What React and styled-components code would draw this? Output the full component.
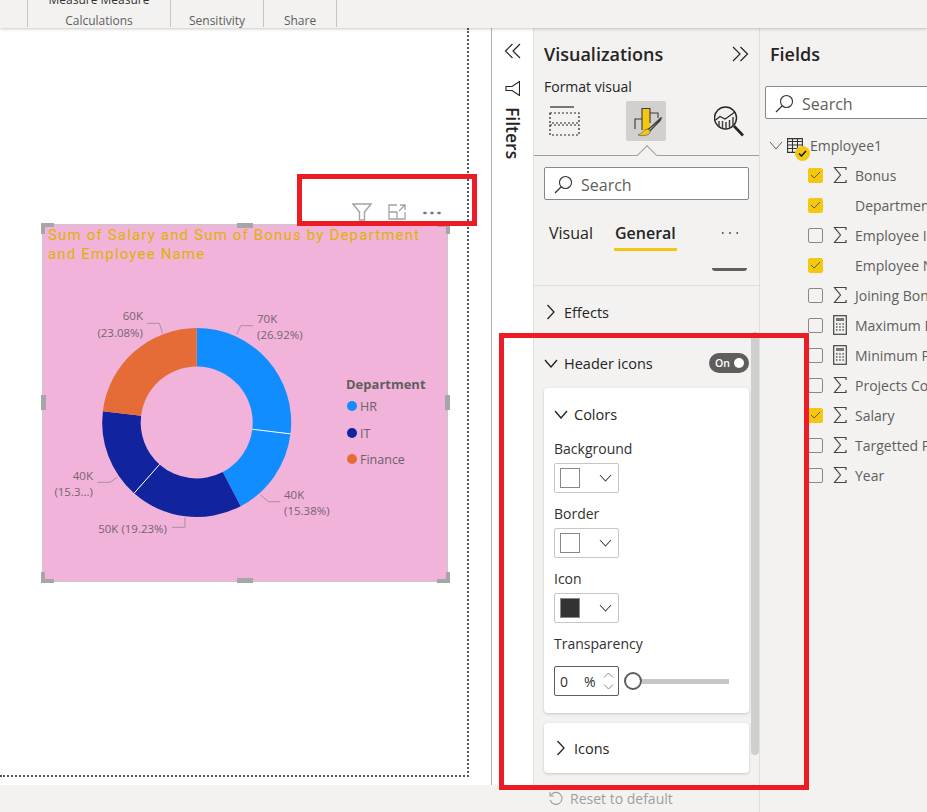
import React from "react";
import styled, { createGlobalStyle } from "styled-components";

const GlobalStyle = createGlobalStyle`
  html, body {
    margin: 0;
    padding: 0;
    background: #f3f2f1;
  }
  * { box-sizing: border-box; }
`;

const font = `"Open Sans", "Noto Sans", "Liberation Sans", sans-serif`;
const yellow = "#f2c811";

const Shell = styled.div`
  position: relative;
  width: 927px;
  height: 812px;
  overflow: hidden;
  background: #f3f2f1;
  font-family: ${font};
  color: #252423;
`;

/* ribbon */
const Ribbon = styled.div`
  position: relative;
  z-index: 2;
  display: flex;
  height: 28px;
  padding-left: 27px;
  overflow: hidden;
  background: #f3f2f1;
  box-shadow: 0 1px 3px rgba(0, 0, 0, 0.22);
`;

const RibbonGroup = styled.div`
  display: flex;
  flex-direction: column;
  justify-content: flex-end;
  align-items: center;
  width: ${(p) => p.$w}px;
  height: 27px;
  border-left: ${(p) => (p.$first ? "1px solid #c8c6c4" : "none")};
  border-right: 1px solid #c8c6c4;
`;

const RibbonTop = styled.span`
  font-size: 12px;
  line-height: 14px;
  height: 14px;
  margin-top: -21px;
  margin-bottom: 7px;
  color: #333;
  white-space: nowrap;
`;

const RibbonLabel = styled.span`
  margin-bottom: -1px;
  font-size: 12px;
  line-height: 14px;
  color: #605e5c;
`;

const Main = styled.div`
  display: flex;
  height: 784px;
`;

/* report canvas */
const Canvas = styled.div`
  width: 491px;
  height: 757px;
  background: #fff;
`;

const Page = styled.div`
  width: 469px;
  height: 749px;
  padding: 174px 0 0 43px;
  border-right: 2px dotted #555;
  border-bottom: 2px dotted #555;
`;

const VisualHeader = styled.div`
  display: flex;
  align-items: center;
  justify-content: flex-end;
  gap: 16px;
  width: 398px;
  height: 20px;
  margin-bottom: 3px;
  color: #a3a3a3;
`;

const DotsWrap = styled.span`
  margin: 1px 0 0 1px;
`;

const Visual = styled.div`
  position: relative;
  width: 404px;
  height: 356px;
  background: #f2b3db;
  outline: 1px solid #c8c8c8;
`;

const VisualTitle = styled.div`
  height: 47px;
  padding: 1px 15px 0 5px;
  font-family: Roboto, "Liberation Sans", sans-serif;
  font-size: 15px;
  line-height: 19px;
  letter-spacing: 1.17px;
  color: #dfb200;
`;

const ChartSvg = styled.svg`
  display: block;
`;

const ChartLabel = styled.text`
  font-family: ${font};
  font-size: 11.5px;
  fill: #75636f;
`;

const LegendTitle = styled.text`
  font-family: ${font};
  font-size: 13px;
  font-weight: 700;
  fill: #605e5c;
`;

const LegendText = styled.text`
  font-family: ${font};
  font-size: 12.5px;
  fill: #6d6068;
`;

const Corner = styled.i`
  position: absolute;
  width: 13px;
  height: 11px;
  border: 0 solid #a6a6a6;
  ${(p) => (p.$top ? "top: -2px; border-top-width: 4px;" : "bottom: -2px; border-bottom-width: 4px;")}
  ${(p) => (p.$left ? "left: -2px; border-left-width: 4px;" : "right: -3px; border-right-width: 4px;")}
`;

const EdgeHandle = styled.i`
  position: absolute;
  background: #a6a6a6;
  ${(p) =>
    p.$vertical
      ? `top: 170px; width: 5px; height: 15px; ${p.$left ? "left: -2px;" : "right: -3px;"}`
      : `left: 194px; width: 16px; height: 5px; ${p.$top ? "top: -2px;" : "bottom: -2px;"}`}
`;

/* filters strip */
const FiltersPane = styled.div`
  width: 43px;
  height: 757px;
  padding-top: 15px;
  display: flex;
  flex-direction: column;
  align-items: center;
  background: #fff;
  border-left: 1px solid #b3b0ad;
  border-right: 1px solid #e1dfdd;
  color: #252423;
`;

const FiltersLabel = styled.div`
  margin-top: 11px;
  writing-mode: vertical-rl;
  font-size: 17.5px;
  font-weight: 600;
  line-height: 20px;
  color: #252423;
`;

/* visualizations pane */
const VizPane = styled.div`
  position: relative;
  width: 226px;
  height: 784px;
  border-right: 1px solid #e1dfdd;
  background: #f3f2f1;
`;

const PaneHead = styled.div`
  display: flex;
  align-items: center;
  justify-content: space-between;
  height: 28px;
  margin-top: 12px;
  padding: 0 10px;
`;

const PaneTitle = styled.h2`
  margin: 0;
  font-size: 18px;
  font-weight: 600;
  color: #252423;
`;

const SubTitle = styled.div`
  height: 20px;
  margin: 9px 0 4px;
  padding-left: 10px;
  font-size: 14px;
  font-weight: 500;
  line-height: 20px;
  color: #252423;
`;

const TabIcons = styled.div`
  position: relative;
  display: flex;
  align-items: center;
  height: 55px;
  padding: 0 0 15px 15px;
  border-bottom: 1px solid #a19f9d;
`;

const ActiveIcon = styled.div`
  display: flex;
  align-items: center;
  justify-content: center;
  width: 40px;
  height: 40px;
  margin: 0 48px 0 46px;
  border-radius: 2px;
  background: #d2d0ce;
`;

const Notch = styled.i`
  position: absolute;
  left: 106px;
  bottom: -7px;
  width: 14px;
  height: 14px;
  transform: rotate(45deg);
  background: #f3f2f1;
  border-left: 1px solid #a19f9d;
  border-top: 1px solid #a19f9d;
`;

const SearchBox = styled.div`
  display: flex;
  align-items: center;
  gap: 8px;
  width: ${(p) => p.$w}px;
  height: 33px;
  padding: 2px 0 0 9px;
  background: #fff;
  border: 1px solid #8a8886;
  border-radius: 2px;
  font-size: 16px;
  color: #605e5c;
  flex: none;
`;

const SearchWrap = styled.div`
  margin-top: 11px;
  padding-left: 10px;
`;

const TabRow = styled.div`
  display: flex;
  align-items: flex-start;
  height: 33px;
  margin-top: 18px;
  padding-left: 14px;
`;

const Tab = styled.div`
  height: 33px;
  margin-right: ${(p) => p.$gap}px;
  padding: 0 1px 3px;
  font-size: 16px;
  font-weight: ${(p) => (p.$active ? 600 : 400)};
  line-height: 30px;
  color: #252423;
  border-bottom: 3px solid ${(p) => (p.$active ? yellow : "transparent")};
`;

const TabMore = styled.div`
  margin-top: 13px;
`;

const CutOff = styled.div`
  height: 35px;
  padding: 17px 0 0 178px;
  border-bottom: 1px solid #e1dfdd;
`;

const CutOffBar = styled.i`
  display: block;
  width: 35px;
  height: 3px;
  border-radius: 0 0 8px 8px;
  background: #605e5c;
`;

const SectionRow = styled.div`
  display: flex;
  align-items: center;
  gap: 6px;
  height: ${(p) => p.$h || 30}px;
  margin-top: ${(p) => p.$top || 0}px;
  padding: 0 ${(p) => p.$right || 0}px 0 ${(p) => p.$left ?? 10}px;
  font-size: 14.5px;
  font-weight: 500;
  color: #252423;
`;

const Grow = styled.span`
  flex: 1;
`;

const Toggle = styled.div`
  display: flex;
  align-items: center;
  justify-content: space-between;
  width: 40px;
  height: 20px;
  padding: 0 5px 0 6px;
  border-radius: 10px;
  background: #605e5c;
  font-size: 10.5px;
  font-weight: 600;
  color: #fff;
`;

const ToggleKnob = styled.i`
  width: 10px;
  height: 10px;
  border-radius: 50%;
  background: #fff;
`;

const Card = styled.div`
  width: 205px;
  height: ${(p) => p.$h}px;
  margin: ${(p) => p.$top}px 0 0 10px;
  padding: 0 10px;
  background: #fff;
  border-radius: 4px;
  box-shadow: 0 1px 3px rgba(0, 0, 0, 0.18);
`;

const CardHead = styled.div`
  display: flex;
  align-items: center;
  gap: 6px;
  height: 36px;
  padding-top: 16px;
  font-size: 14.5px;
  font-weight: 500;
  color: #252423;
`;

const FieldLabel = styled.div`
  height: 20px;
  margin-top: ${(p) => p.$top}px;
  margin-bottom: ${(p) => p.$bottom}px;
  font-size: 14px;
  line-height: 20px;
  color: #323130;
`;

const ColorSelect = styled.div`
  display: flex;
  align-items: center;
  justify-content: space-between;
  width: 65px;
  height: 30px;
  padding: 0 6px 0 5px;
  border: 1px solid #c8c6c4;
  border-radius: 2px;
`;

const Swatch = styled.i`
  width: 20px;
  height: 20px;
  border: 1px solid #8a8886;
  background: ${(p) => p.$color};
`;

const SliderRow = styled.div`
  display: flex;
  align-items: center;
`;

const PercentInput = styled.div`
  display: flex;
  align-items: center;
  width: 65px;
  height: 30px;
  padding: 0 4px 0 5px;
  border: 1px solid #605e5c;
  border-radius: 2px;
  font-size: 14px;
  color: #323130;
`;

const PercentValue = styled.span`
  width: 24px;
`;

const Spinners = styled.div`
  display: flex;
  flex-direction: column;
  gap: 6px;
  margin-left: auto;
`;

const SliderKnob = styled.i`
  flex: none;
  width: 18px;
  height: 18px;
  margin-left: 5px;
  border: 2px solid #605e5c;
  border-radius: 50%;
  background: #fff;
`;

const SliderTrack = styled.i`
  width: 87px;
  height: 5px;
  background: #c8c6c4;
`;

const Reset = styled.div`
  display: flex;
  align-items: center;
  gap: 6px;
  height: 20px;
  margin-top: 15px;
  padding-left: 14px;
  font-size: 14px;
  color: #a19f9d;
`;

const ScrollThumb = styled.i`
  position: absolute;
  top: 304px;
  right: 0;
  width: 8px;
  height: 423px;
  border-radius: 4px;
  background: #cfcfcd;
`;

/* fields pane */
const FieldsPane = styled.div`
  flex: 1;
  min-width: 0;
  overflow: hidden;
  height: 784px;
`;

const FieldsSearch = styled.div`
  padding: 18px 0 0 5px;
`;

const TreeHead = styled.div`
  display: flex;
  align-items: center;
  height: 30px;
  margin-top: 11px;
  padding-left: 9px;
  font-size: 14px;
  color: #605e5c;
  white-space: nowrap;
`;

const TableWrap = styled.span`
  position: relative;
  width: 16px;
  height: 15px;
  margin: 0 7px 0 4px;
`;

const TableBadge = styled.i`
  position: absolute;
  left: 8px;
  top: 8px;
  display: flex;
  align-items: center;
  justify-content: center;
  width: 15px;
  height: 15px;
  border-radius: 50%;
  background: ${yellow};
`;

const FieldRow = styled.div`
  display: flex;
  align-items: center;
  height: 30px;
  padding-left: 48px;
  font-size: 14px;
  color: #605e5c;
  white-space: nowrap;
`;

const Check = styled.span`
  display: flex;
  align-items: center;
  justify-content: center;
  flex: none;
  width: 15px;
  height: 15px;
  border-radius: 2px;
  border: 1px solid ${(p) => (p.$on ? yellow : "#8a8886")};
  background: ${(p) => (p.$on ? yellow : "transparent")};
`;

const FieldIcon = styled.span`
  display: flex;
  justify-content: center;
  flex: none;
  width: 14px;
  margin: 0 8px 0 10px;
`;

/* annotation boxes */
const RedBox = styled.div`
  position: absolute;
  z-index: 5;
  left: ${(p) => p.$x}px;
  top: ${(p) => p.$y}px;
  width: ${(p) => p.$w}px;
  height: ${(p) => p.$h}px;
  border: 5px solid #ed1c24;
  pointer-events: none;
`;

const Svg = ({ w, h, children, ...rest }) => (
  <svg width={w} height={h} viewBox={`0 0 ${w} ${h}`} fill="none" style={{ flex: "none", display: "block" }} {...rest}>
    {children}
  </svg>
);

const ChevronRight = ({ size = 14 }) => (
  <Svg w={size} h={size + 2}>
    <path d={`M3.5 1 L${size - 4} ${(size + 2) / 2} L3.5 ${size + 1}`} stroke="#252423" strokeWidth="1.3" />
  </Svg>
);

const ChevronDown = ({ w = 14, h = 9, color = "#252423", sw = 1.4 }) => (
  <Svg w={w} h={h}>
    <path d={`M1 1 L${w / 2} ${h - 1} L${w - 1} 1`} stroke={color} strokeWidth={sw} />
  </Svg>
);

const DoubleChevron = ({ left }) => (
  <Svg w={17} h={16} style={{ display: "block", transform: left ? "scaleX(-1)" : "none" }}>
    <path d="M1 1 L8 8 L1 15 M8.5 1 L15.5 8 L8.5 15" stroke="#252423" strokeWidth="1.2" />
  </Svg>
);

const SearchIcon = () => (
  <Svg w={19} h={19}>
    <circle cx="11.5" cy="7.5" r="6" stroke="#323130" strokeWidth="1.1" />
    <path d="M7.3 11.8 L1 18" stroke="#323130" strokeWidth="1.2" />
  </Svg>
);

const Sigma = () => (
  <Svg w={14} h={18}>
    <path d="M13 4 V1.5 H1.5 L7.5 9 L1.5 16.5 H13 V14" stroke="#444" strokeWidth="1.2" />
  </Svg>
);

const Calculator = () => (
  <Svg w={14} h={20}>
    <rect x="0.7" y="0.7" width="12.6" height="18.6" stroke="#444" strokeWidth="1.2" />
    <rect x="3" y="3" width="8" height="3" fill="#777" />
    <path d="M3 9 H4.5 M6.2 9 H7.7 M9.4 9 H10.9 M3 12 H4.5 M6.2 12 H7.7 M9.4 12 H10.9 M3 15 H4.5 M6.2 15 H7.7 M9.4 15 H10.9" stroke="#555" strokeWidth="1.5" />
  </Svg>
);

const Tick = ({ color = "#6b5b10", w = 11, h = 8, sw = 1 }) => (
  <Svg w={w} h={h}>
    <path d={`M1 ${h / 2} L${w * 0.38} ${h - 1} L${w - 1} 1`} stroke={color} strokeWidth={sw} />
  </Svg>
);

const polar = (cx, cy, r, deg) => {
  const a = ((deg - 90) * Math.PI) / 180;
  return [cx + r * Math.cos(a), cy + r * Math.sin(a)];
};

const ringPath = (start, end) => {
  const [cx, cy, R, r] = [196.7, 422.5, 94.5, 56];
  const [x1, y1] = polar(cx, cy, R, start);
  const [x2, y2] = polar(cx, cy, R, end);
  const [x3, y3] = polar(cx, cy, r, end);
  const [x4, y4] = polar(cx, cy, r, start);
  const large = end - start > 180 ? 1 : 0;
  return `M${x1} ${y1} A${R} ${R} 0 ${large} 1 ${x2} ${y2} L${x3} ${y3} A${r} ${r} 0 ${large} 0 ${x4} ${y4} Z`;
};

const slices = [
  { from: 0, to: 26.92, color: "#118dff" },
  { from: 26.92, to: 42.3, color: "#118dff" },
  { from: 42.3, to: 61.53, color: "#12239e" },
  { from: 61.53, to: 76.92, color: "#12239e" },
  { from: 76.92, to: 100, color: "#e66c37" },
];

const leaders = [
  "M236.7 334.3 L240.7 325.7 H252.7",
  "M162.7 333.3 L159.3 323.3 H147.3",
  "M117.3 477.3 L110 482.3 H97.3",
  "M260.7 495 L268.3 501.7 H280",
  "M185 517.7 V527.3 H171.7",
];

const labels = [
  { x: 257, y: 323, text: "70K" },
  { x: 257, y: 339, text: "(26.92%)" },
  { x: 143, y: 320, text: "60K", end: true },
  { x: 143, y: 337, text: "(23.08%)", end: true },
  { x: 93, y: 480, text: "40K", end: true },
  { x: 93, y: 496, text: "(15.3...)", end: true },
  { x: 284, y: 499, text: "40K" },
  { x: 284, y: 515, text: "(15.38%)" },
  { x: 167, y: 533, text: "50K (19.23%)", end: true },
];

const legend = [
  { y: 406, color: "#118dff", text: "HR" },
  { y: 433, color: "#12239e", text: "IT" },
  { y: 459, color: "#e66c37", text: "Finance" },
];

const DonutChart = () => {
  const separators = [26.92, 61.53].map((pct) => {
    const deg = pct * 3.6;
    const [x1, y1] = polar(196.7, 422.5, 56, deg);
    const [x2, y2] = polar(196.7, 422.5, 94.5, deg);
    return { x1, y1, x2, y2 };
  });
  return (
    <ChartSvg width="404" height="309" viewBox="43 272 404 309">
      {slices.map((s) => (
        <path key={s.from} d={ringPath(s.from * 3.6, s.to * 3.6)} fill={s.color} />
      ))}
      {separators.map((s) => (
        <line key={s.x1} {...s} stroke="#fff" strokeWidth="1" />
      ))}
      {leaders.map((d) => (
        <path key={d} d={d} fill="none" stroke="#a6909f" strokeWidth="1" />
      ))}
      {labels.map((l) => (
        <ChartLabel key={l.text + l.y} x={l.x} y={l.y} textAnchor={l.end ? "end" : "start"}>
          {l.text}
        </ChartLabel>
      ))}
      <LegendTitle x="346" y="389">Department</LegendTitle>
      {legend.map((l) => (
        <g key={l.text}>
          <circle cx="352" cy={l.y} r="5" fill={l.color} />
          <LegendText x="360" y={l.y + 4.5}>{l.text}</LegendText>
        </g>
      ))}
    </ChartSvg>
  );
};

const fields = [
  { name: "Bonus", on: true, icon: "sum" },
  { name: "Department", on: true },
  { name: "Employee ID", icon: "sum" },
  { name: "Employee Name", on: true },
  { name: "Joining Bonus", icon: "sum" },
  { name: "Maximum Pay", icon: "calc" },
  { name: "Minimum Pay", icon: "calc" },
  { name: "Projects Completed", icon: "sum" },
  { name: "Salary", on: true, icon: "sum" },
  { name: "Targetted Projects", icon: "sum" },
  { name: "Year", icon: "sum" },
];

const colorFields = [
  { label: "Background", color: "#fff", top: 15 },
  { label: "Border", color: "#fff", top: 11 },
  { label: "Icon", color: "#333", top: 11 },
];

export default function App() {
  return (
    <Shell>
      <GlobalStyle />
      <Ribbon>
        <RibbonGroup $w={144} $first>
          <RibbonTop>Measure Measure</RibbonTop>
          <RibbonLabel>Calculations</RibbonLabel>
        </RibbonGroup>
        <RibbonGroup $w={93}>
          <RibbonLabel>Sensitivity</RibbonLabel>
        </RibbonGroup>
        <RibbonGroup $w={73}>
          <RibbonLabel>Share</RibbonLabel>
        </RibbonGroup>
      </Ribbon>

      <Main>
        <Canvas>
          <Page>
            <VisualHeader>
              <Svg w={20} h={18}>
                <path d="M1 1 H19 L12.5 9 V17 H7.5 V9 Z" stroke="#a3a3a3" strokeWidth="1.4" />
              </Svg>
              <Svg w={18} h={16}>
                <path d="M9 1 H1 V15 H17 V8 M1 8 H9 V15 M11 7 L17 1 M12 1 H17 V6" stroke="#a3a3a3" strokeWidth="1.3" />
              </Svg>
              <DotsWrap>
                <Svg w={18} h={4}>
                  <path d="M1.5 2 H2.5 M8.5 2 H9.5 M15.5 2 H16.5" stroke="#7a7876" strokeWidth="2.6" strokeLinecap="round" />
                </Svg>
              </DotsWrap>
            </VisualHeader>
            <Visual>
              <VisualTitle>Sum of Salary and Sum of Bonus by Department and Employee Name</VisualTitle>
              <DonutChart />
              <Corner $top $left />
              <Corner $top />
              <Corner $left />
              <Corner />
              <EdgeHandle $top />
              <EdgeHandle />
              <EdgeHandle $vertical $left />
              <EdgeHandle $vertical />
            </Visual>
          </Page>
        </Canvas>

        <FiltersPane>
          <DoubleChevron left />
          <Svg w={15} h={15} style={{ display: "block", marginTop: 22 }}>
            <path d="M14.5 0.5 V14.5 L7 9.5 H1 V5.5 H7 Z" stroke="#252423" strokeWidth="1.1" />
          </Svg>
          <FiltersLabel>Filters</FiltersLabel>
        </FiltersPane>

        <VizPane>
          <PaneHead>
            <PaneTitle>Visualizations</PaneTitle>
            <DoubleChevron />
          </PaneHead>
          <SubTitle>Format visual</SubTitle>
          <TabIcons>
            <Svg w={31} h={30}>
              <path d="M1 1 H25" stroke="#252423" strokeWidth="1.2" />
              <path d="M1 7 H30 V17 H1 Z M1 19 H30 V29 H1 Z" stroke="#252423" strokeWidth="1.2" strokeDasharray="2 2" />
            </Svg>
            <ActiveIcon>
              <Svg w={40} h={40}>
                <rect x="16" y="8" width="8" height="21" fill={yellow} />
                <path d="M9 28 V18 H16 M16 29 V7.5 H24 V12 H32 V17 M24 12 V22" stroke="#3b3a39" strokeWidth="1.1" />
                <path d="M35.5 16.5 L24.5 26.5 L22 28.5 L24 30 L34 19.5 Z" fill="#d2d0ce" stroke="#3b3a39" strokeWidth="1.3" />
                <path d="M21 28 C24 28.5 25 31 23 33 C20 35 15 35 12 34 C16 33 17 29 21 28 Z" fill={yellow} stroke="#605e5c" strokeWidth="0.7" />
              </Svg>
            </ActiveIcon>
            <Svg w={32} h={32}>
              <circle cx="11.5" cy="13" r="11" stroke="#252423" strokeWidth="1.4" />
              <path d="M1.5 15 L6 11.5 L11 14 L14 12 L21 7" stroke="#252423" strokeWidth="1.2" />
              <path d="M5 16 V22 M8.5 16 V23.5 M12 17 V23.5 M15.5 15 V23 M19 12 V21" stroke="#444" strokeWidth="1.5" />
              <path d="M20 21 L29 30.5" stroke="#252423" strokeWidth="2.6" />
            </Svg>
            <Notch />
          </TabIcons>
          <SearchWrap>
            <SearchBox $w={205}>
              <SearchIcon />
              Search
            </SearchBox>
          </SearchWrap>
          <TabRow>
            <Tab $gap={20}>Visual</Tab>
            <Tab $active $gap={44}>General</Tab>
            <TabMore>
              <Svg w={18} h={4}>
                <path d="M1 2 H2.5 M8.2 2 H9.7 M15.5 2 H17" stroke="#252423" strokeWidth="1.6" />
              </Svg>
            </TabMore>
          </TabRow>
          <CutOff>
            <CutOffBar />
          </CutOff>
          <SectionRow $top={11}>
            <ChevronRight />
            Effects
          </SectionRow>
          <SectionRow $top={21} $right={10}>
            <ChevronDown />
            Header icons
            <Grow />
            <Toggle>
              On
              <ToggleKnob />
            </Toggle>
          </SectionRow>
          <Card $h={325} $top={10}>
            <CardHead>
              <ChevronDown />
              Colors
            </CardHead>
            {colorFields.map((f) => (
              <div key={f.label}>
                <FieldLabel $top={f.top} $bottom={4}>{f.label}</FieldLabel>
                <ColorSelect>
                  <Swatch $color={f.color} />
                  <ChevronDown w={13} h={8} color="#444" sw={1.1} />
                </ColorSelect>
              </div>
            ))}
            <FieldLabel $top={11} $bottom={12}>Transparency</FieldLabel>
            <SliderRow>
              <PercentInput>
                <PercentValue>0</PercentValue>
                %
                <Spinners>
                  <Svg w={11} h={6}><path d="M1 5.5 L5.5 1 L10 5.5" stroke="#8a8886" /></Svg>
                  <Svg w={11} h={6}><path d="M1 0.5 L5.5 5 L10 0.5" stroke="#8a8886" /></Svg>
                </Spinners>
              </PercentInput>
              <SliderKnob />
              <SliderTrack />
            </SliderRow>
          </Card>
          <Card $h={50} $top={10}>
            <SectionRow $h={50} $left={0}>
              <ChevronRight />
              Icons
            </SectionRow>
          </Card>
          <Reset>
            <Svg w={16} h={15}>
              <path d="M3 4 A6 6 0 1 1 2.2 9 M2 1 V5 H6" stroke="#a19f9d" strokeWidth="1.1" />
            </Svg>
            Reset to default
          </Reset>
          <ScrollThumb />
        </VizPane>

        <FieldsPane>
          <PaneHead>
            <PaneTitle>Fields</PaneTitle>
          </PaneHead>
          <FieldsSearch>
            <SearchBox $w={190}>
              <SearchIcon />
              Search
            </SearchBox>
          </FieldsSearch>
          <TreeHead>
            <ChevronDown w={14} h={9} color="#605e5c" sw={1} />
            <TableWrap>
              <Svg w={16} h={15}>
                <path d="M0.6 0.6 H15.4 V14.4 H0.6 Z M0.6 3.5 H15.4 M0.6 7 H15.4 M0.6 10.5 H15.4 M5.5 0.6 V14.4 M10.5 0.6 V14.4" stroke="#333" strokeWidth="1.1" />
              </Svg>
              <TableBadge>
                <Tick color="#111" w={9} h={7} sw={1.5} />
              </TableBadge>
            </TableWrap>
            Employee1
          </TreeHead>
          {fields.map((f) => (
            <FieldRow key={f.name}>
              <Check $on={f.on}>{f.on && <Tick />}</Check>
              <FieldIcon>
                {f.icon === "sum" && <Sigma />}
                {f.icon === "calc" && <Calculator />}
              </FieldIcon>
              {f.name}
            </FieldRow>
          ))}
        </FieldsPane>
      </Main>

      <RedBox $x={297} $y={174} $w={180} $h={52} />
      <RedBox $x={499} $y={333} $w={310} $h={457} />
    </Shell>
  );
}
